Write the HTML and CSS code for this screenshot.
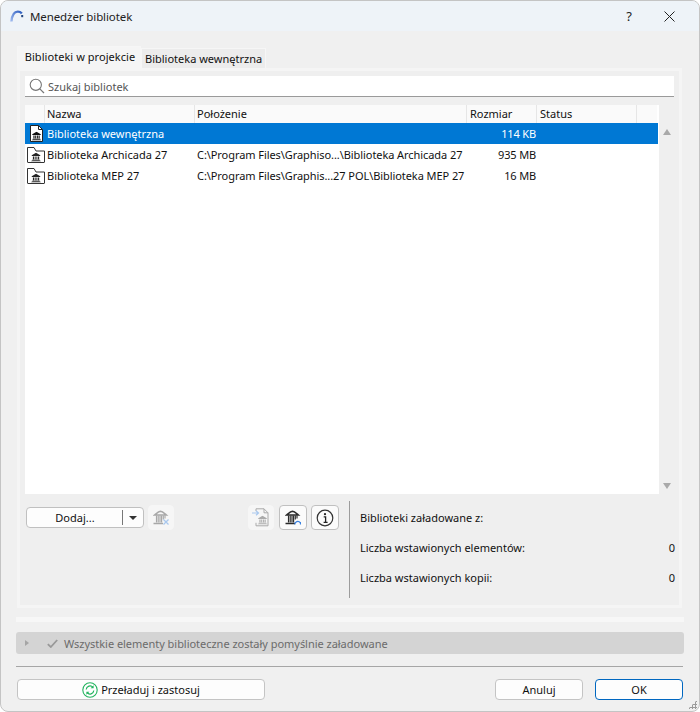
FILE: index.html
```html
<!DOCTYPE html>
<html lang="pl">
<head>
<meta charset="utf-8">
<title>Menedżer bibliotek</title>
<link rel="stylesheet" href="styles.css">
</head>
<body>
<svg class="defs" width="0" height="0" aria-hidden="true">
  <symbol id="bank" viewBox="0 0 12 11">
    <path d="M6 .3 .8 3.300v.9h10.400v-.9z" fill="currentColor"/>
    <path d="M2.200 4.800h1.400v3.800H2.200zM4.400 4.800h1.200v3.800H4.400zM6.500 4.800h1.200v3.800H6.500zM8.500 4.800h1.400v3.800H8.500z" fill="currentColor"/>
    <path d="M1.300 9h9.400v.9H1.300zM.2 10.100h11.600v.9H.2z" fill="currentColor"/>
  </symbol>
  <symbol id="bank-line" viewBox="0 0 16 15">
    <path d="M1.500 5C4 3 5.500 1.500 7.500 1.300 9.500 1.500 11 3 13.500 5z" fill="none" stroke="currentColor" stroke-width="1.400"/>
    <path d="M3.500 5.500v7M5.200 5.500v7M7 5.500v7M8.600 5.500v7M10.300 5.500v4M12 5.500v3" fill="none" stroke="currentColor" stroke-width="1.150"/>
    <path d="M.5 13.500H10" fill="none" stroke="currentColor" stroke-width="1.500"/>
  </symbol>
</svg>
<main class="dialog">
  <header class="titlebar">
    <svg class="app-icon" width="14" height="12" viewBox="0 0 14 12"><defs><linearGradient id="arc" x1="0" y1="1" x2="1" y2="0"><stop offset="0" stop-color="#9db8ee"/><stop offset="1" stop-color="#2f5fc0"/></linearGradient></defs><path d="M1.400 11.500C2 5.500 4.500 1.600 7.800 1.600c1.800 0 3 .6 4 1.800" fill="none" stroke="url(#arc)" stroke-width="2.400"/><rect x="11.200" y="5" width="2" height="2.200" fill="#24457f"/></svg>
    <span class="title">Menedżer bibliotek</span>
    <span class="help">?</span>
    <svg class="close" width="11" height="11" viewBox="0 0 11 11"><path d="M.5.5l10 10M10.500.5l-10 10" stroke="#222" stroke-width="1" fill="none"/></svg>
  </header>

  <div class="content">
    <nav class="tabs">
      <span class="tab active">Biblioteki w projekcie</span>
      <span class="tab">Biblioteka wewnętrzna</span>
    </nav>

    <section class="panel">
      <div class="search">
        <svg width="16" height="16" viewBox="0 0 16 16"><circle cx="6.800" cy="6.800" r="5.600" fill="none" stroke="#777" stroke-width="1.100"/><path d="M10.800 10.800l4.200 4.200" stroke="#777" stroke-width="1.200"/></svg>
        <span>Szukaj bibliotek</span>
      </div>

      <div class="table-wrap">
        <div class="table">
          <div class="thead">
            <span class="c-icon"></span>
            <span class="c-name">Nazwa</span>
            <span class="c-path">Położenie</span>
            <span class="c-size">Rozmiar</span>
            <span class="c-status">Status</span>
            <span class="c-rest"></span>
          </div>
          <div class="row selected">
            <span class="c-icon">
              <svg class="file-ico" width="13" height="17" viewBox="0 0 13 17"><path d="M.5.500h8l4 4v12H.5z" fill="#fff" stroke="#222"/><path d="M8.500.500v4h4" fill="none" stroke="#222"/><use href="#bank" x="1.500" y="6.500" width="10" height="9" color="#111"/></svg>
            </span>
            <span class="c-name">Biblioteka wewnętrzna</span>
            <span class="c-path"></span>
            <span class="c-size">114 KB</span>
            <span class="c-status"></span>
          </div>
          <div class="row">
            <span class="c-icon">
              <svg class="folder-ico" width="18" height="16" viewBox="0 0 18 16"><path d="M.5 15V.500h6.500l2 3.500h8.500v11a.5.500 0 0 1-.5.500H1a.5.500 0 0 1-.5-.500z" fill="#fff" stroke="#333"/><use href="#bank" x="4" y="5.500" width="10" height="9" color="#222"/></svg>
            </span>
            <span class="c-name">Biblioteka Archicada 27</span>
            <span class="c-path">C:\Program Files\Graphiso...\Biblioteka Archicada 27</span>
            <span class="c-size">935 MB</span>
            <span class="c-status"></span>
          </div>
          <div class="row">
            <span class="c-icon">
              <svg class="folder-ico" width="18" height="16" viewBox="0 0 18 16"><path d="M.5 15V.500h6.500l2 3.500h8.500v11a.5.500 0 0 1-.5.500H1a.5.500 0 0 1-.5-.500z" fill="#fff" stroke="#333"/><use href="#bank" x="4" y="5.500" width="10" height="9" color="#222"/></svg>
            </span>
            <span class="c-name">Biblioteka MEP 27</span>
            <span class="c-path">C:\Program Files\Graphis...27 POL\Biblioteka MEP 27</span>
            <span class="c-size">16 MB</span>
            <span class="c-status"></span>
          </div>
        </div>
        <div class="scrollbar">
          <span class="arrow up"></span>
          <span class="arrow down"></span>
        </div>
      </div>

      <div class="lower">
        <div class="actions">
          <div class="split-btn">
            <span class="split-label">Dodaj...</span>
            <span class="split-sep"></span>
            <span class="split-caret"></span>
          </div>
          <button class="icon-btn disabled del" type="button">
            <svg width="17" height="16" viewBox="0 0 17 16"><use href="#bank-line" x="0" y="0" width="16" height="15" color="#a8a8a8"/><path d="M10.500 9.500l5 5M15.500 9.500l-5 5" stroke="#a9c8ee" stroke-width="1.300"/></svg>
          </button>
          <span class="spacer"></span>
          <button class="icon-btn disabled" type="button">
            <svg width="18" height="19" viewBox="0 0 18 19"><path d="M4 3V.8h8l4 4v13H4v-3" fill="#f6f6f6" stroke="#aaa"/><path d="M12 .8v4h4" fill="none" stroke="#aaa"/><use href="#bank" x="5.500" y="7.500" width="10" height="9" color="#aaa"/><path d="M0 5h6M4 2.800 6.500 5 4 7.200" fill="none" stroke="#a9c8ee" stroke-width="1.200"/></svg>
          </button>
          <button class="icon-btn wide first" type="button">
            <svg width="16" height="15" viewBox="0 0 16 15"><use href="#bank-line" x="0" y="0" width="16" height="15" color="#2a2a2a"/><path d="M9.800 14.500a3 3 0 0 1 5.400-1.800M15.500 14.500v-2.600" fill="none" stroke="#3b82e0" stroke-width="1.300"/></svg>
          </button>
          <button class="icon-btn wide" type="button">
            <svg width="18" height="18" viewBox="0 0 18 18"><circle cx="9" cy="9" r="7.800" fill="none" stroke="#333" stroke-width="1.200"/><circle cx="9" cy="5.200" r="1.100" fill="#222"/><path d="M7.700 7.800H9.600v5.400M7.600 13.300h4" fill="none" stroke="#222" stroke-width="1.300"/></svg>
          </button>
        </div>
        <div class="info">
          <div class="info-row"><span>Biblioteki załadowane z:</span></div>
          <div class="info-row"><span>Liczba wstawionych elementów:</span><span>0</span></div>
          <div class="info-row"><span>Liczba wstawionych kopii:</span><span>0</span></div>
        </div>
      </div>
    </section>

    <div class="band"></div>

    <div class="status">
      <span class="status-caret"></span>
      <svg width="11" height="9" viewBox="0 0 11 9"><path d="M.8 5.200 3.800 8 10.200 1" fill="none" stroke="#999" stroke-width="1.800"/></svg>
      <span class="status-text">Wszystkie elementy biblioteczne zostały pomyślnie załadowane</span>
    </div>

    <hr class="rule">

    <footer class="footer">
      <button class="btn reload" type="button">
        <svg width="16" height="16" viewBox="0 0 16 16"><circle cx="8" cy="8" r="7.200" fill="#fff" stroke="#22b35e" stroke-width="1.100"/><path d="M4.200 7.500A3.900 3.900 0 0 1 11 5.300M11.800 8.500A3.900 3.900 0 0 1 5 10.700" fill="none" stroke="#22b35e" stroke-width="1.200"/><path d="M11.600 3.200v3h-3zM4.400 12.800v-3h3z" fill="#22b35e"/></svg>
        <span>Przeładuj i zastosuj</span>
      </button>
      <span class="spacer"></span>
      <button class="btn cancel" type="button">Anuluj</button>
      <button class="btn ok" type="button">OK</button>
    </footer>
  </div>
  <div class="grip"></div>
</main>
</body>
</html>
```

FILE: styles.css
```css
* { box-sizing: border-box; }
html, body { margin: 0; padding: 0; height: 100%; background: #fff; }
body {
  font-family: "Noto Sans", "Open Sans", "Liberation Sans", sans-serif;
  font-size: 11px;
  color: #111;
  overflow: hidden;
}
.defs { position: absolute; }
.dialog {
  position: relative;
  width: 700px;
  height: 712px;
  background: #f0f0f0;
  border: 1px solid #c4c4c4;
  border-radius: 8px;
  overflow: hidden;
}

/* title bar */
.titlebar {
  height: 30px;
  background: #eef3f8;
  display: flex;
  align-items: center;
  padding: 0 24px 0 9px;
}
.app-icon { margin-right: 6px; }
.title { font-size: 11.500px; letter-spacing: -0.1px; color: #222; flex: 1; }
.help { font-size: 13px; margin-right: 32px; color: #222; }

.content { padding: 15px 15px 0 15px; }

/* tabs */
.tabs { display: flex; align-items: flex-end; height: 22px; padding-left: 1px; }
.tab {
  height: 20px;
  line-height: 20px;
  padding: 0 3px;
  width: 125px;
  text-align: center;
  background: #ececec;
  border: 1px solid #f6f6f6;
  border-bottom: 0;
  white-space: nowrap;
}
.tab.active {
  height: 22px;
  line-height: 19px;
  width: 124px;
  padding-left: 5px;
  letter-spacing: 0.05px;
  background: #f5f5f5;
}

/* panel */
.panel {
  margin-left: 1px;
  width: 665px;
  height: 540px;
  border: 3px solid #f5f5f5;
  background: #efefef;
  padding: 5px 5px 0 5px;
}
.search {
  height: 21px;
  background: #fff;
  border-bottom: 1px solid #9a9a9a;
  display: flex;
  align-items: center;
  gap: 3px;
  padding-left: 4px;
  color: #555;
}
.table-wrap { display: flex; height: 389px; margin-top: 8px; }
.table { width: 634px; flex: none; background: #fff; }
.scrollbar {
  flex: 1;
  position: relative;
}
.arrow {
  position: absolute;
  left: 4px;
  width: 0;
  height: 0;
  border-left: 4.500px solid transparent;
  border-right: 4.500px solid transparent;
}
.arrow.up { top: 24px; border-bottom: 6px solid #a9a9a9; }
.arrow.down { bottom: 5px; border-top: 6px solid #a9a9a9; }

.thead, .row { display: flex; align-items: center; }
.thead { height: 18px; width: 632px; background: #fafafa; }
.thead > span {
  height: 100%;
  line-height: 18px;
  border-right: 1px solid #e6e6e6;
}
.row { height: 21px; width: 633px; }
.row.selected { background: #0078d4; color: #fff; }
.c-icon {
  width: 20px;
  flex: none;
  display: flex;
  align-items: center;
  justify-content: center;
}
.c-name, .c-path, .c-size, .c-status { flex: none; white-space: nowrap; overflow: hidden; }
.c-name { width: 150px; padding-left: 2px; }
.c-path { width: 272px; padding-left: 2px; }
.row .c-path { letter-spacing: -0.07px; }
.c-size { width: 70px; text-align: right; }
.row .c-size { letter-spacing: -0.15px; padding-right: 1px; }
.c-status { width: 100px; padding-left: 3px; }
.c-rest { width: 20px; flex: none; }
.thead .c-size { text-align: left; padding-left: 3px; }
.thead .c-rest { border-right: 0; }
.file-ico { margin-left: 2px; }
.folder-ico { margin-left: 1px; }

/* lower */
.lower { display: flex; margin-top: 7px; height: 97px; }
.actions {
  width: 324px;
  flex: none;
  display: flex;
  align-items: flex-start;
  padding: 4px 10px 0 1px;
}
.split-btn {
  margin-top: 2px;
  width: 118px;
  height: 21px;
  background: #fdfdfd;
  border: 1px solid #c0c0c0;
  border-radius: 4px;
  display: flex;
  align-items: center;
}
.split-label { flex: 1; text-align: center; padding-left: 1px; }
.split-sep { width: 1px; height: 15px; background: #777; }
.split-caret {
  width: 0;
  height: 0;
  margin: 0 6px 0 6px;
  border-left: 4px solid transparent;
  border-right: 4px solid transparent;
  border-top: 4px solid #333;
}
.icon-btn {
  width: 26px;
  height: 25px;
  padding: 0;
  border: 1px solid #f6f6f6;
  border-radius: 4px;
  background: #f6f6f6;
  display: flex;
  align-items: center;
  justify-content: center;
}
.icon-btn.del { margin-left: 4px; }
.icon-btn.wide {
  width: 28px;
  margin-left: 4px;
  background: #fbfbfb;
  border-color: #c0c0c0;
}
.icon-btn.wide.first { margin-left: 5px; }
.spacer { flex: 1; }
.info {
  width: 326px;
  flex: none;
  border-left: 1px solid #9c9c9c;
  padding-left: 10px;
  height: 97px;
  display: flex;
  flex-direction: column;
}
.info-row {
  height: 30px;
  display: flex;
  align-items: center;
  justify-content: space-between;
  padding-top: 3px;
}

/* bottom */
.band { height: 5px; margin-top: 9px; background: #f7f7f7; width: 668px; }
.status {
  margin-top: 10px;
  width: 668px;
  height: 22px;
  background: #d4d4d4;
  border-radius: 3px;
  display: flex;
  align-items: center;
  padding-left: 9px;
  color: #6b6b6b;
}
.status-caret {
  width: 0;
  height: 0;
  margin-right: 18px;
  border-top: 3.500px solid transparent;
  border-bottom: 3.500px solid transparent;
  border-left: 4px solid #a5a5a5;
}
.status svg { margin-right: 6px; }
.status-text { letter-spacing: -0.03px; }
.rule { margin: 12px 0 0; width: 667px; height: 1px; border: 0; background: #a6a6a6; }
.footer { display: flex; margin-top: 12px; padding-left: 1px; width: 667px; }
.btn {
  height: 21px;
  padding: 0;
  font: inherit;
  color: #111;
  background: #fdfdfd;
  border: 1px solid #c4c4c4;
  border-radius: 4px;
}
.reload {
  width: 248px;
  display: flex;
  align-items: center;
  justify-content: center;
  gap: 3px;
}
.cancel { width: 88px; }
.ok { width: 88px; margin-left: 12px; border-color: #0067c0; }
.grip {
  position: absolute;
  right: 2px;
  bottom: 2px;
  width: 9px;
  height: 9px;
  background-image: radial-gradient(circle, #9a9a9a 1px, transparent 1.100px);
  background-size: 3px 3px;
  clip-path: polygon(100% 0, 100% 100%, 0 100%);
}
```
